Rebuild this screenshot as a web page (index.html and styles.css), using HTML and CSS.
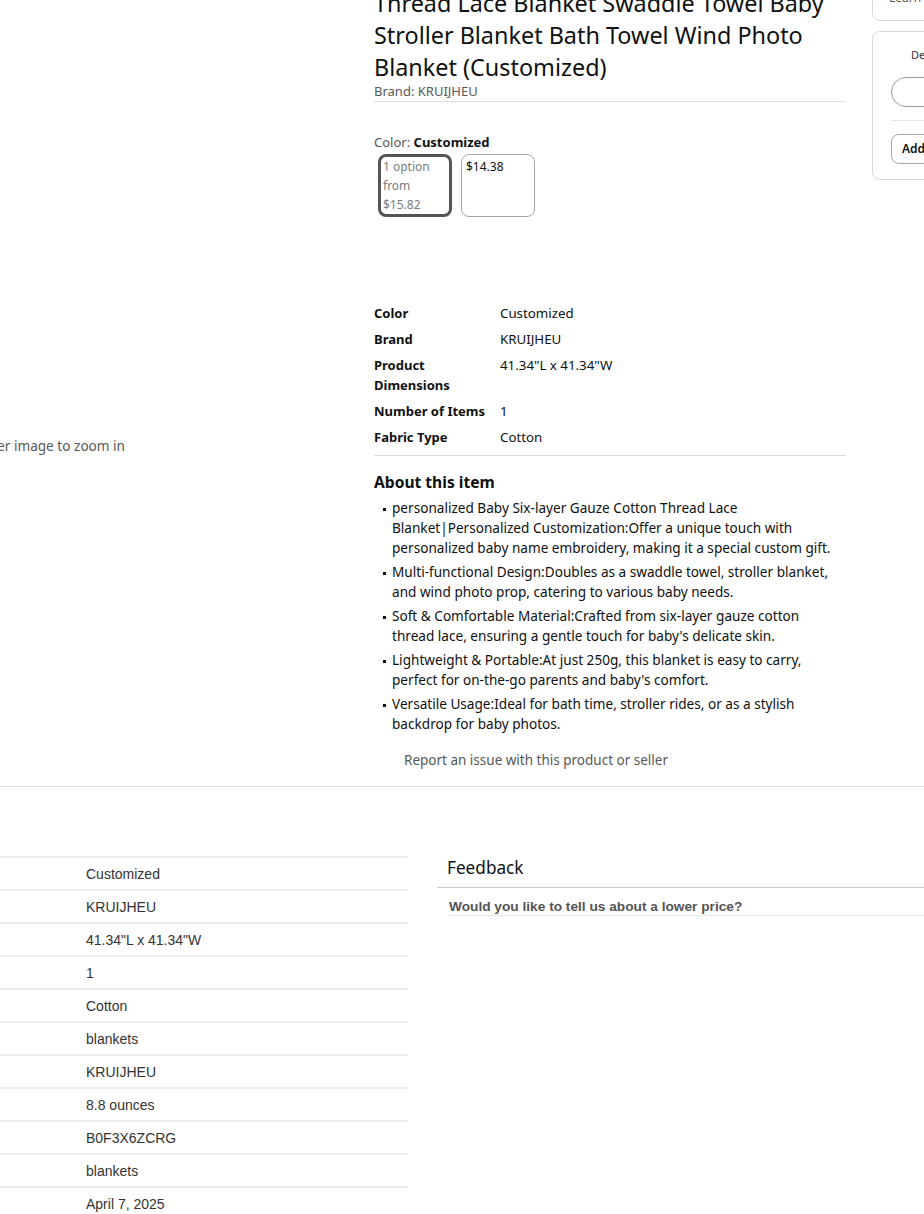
FILE: index.html
```html
<!DOCTYPE html>
<html lang="en">
<head>
<meta charset="utf-8">
<title>Product</title>
<link rel="stylesheet" href="styles.css">
</head>
<body>
<div class="page">
  <div class="top">
    <div class="media">
      <div class="image-slot"></div>
      <p class="zoom-hint">Roll over image to zoom in</p>
    </div>
    <div class="center">
      <h1 class="title">personalized Baby Six-layer Gauze Cotton Thread Lace Blanket Swaddle Towel Baby Stroller Blanket Bath Towel Wind Photo Blanket (Customized)</h1>
      <a class="brand">Brand: KRUIJHEU</a>
      <hr class="rule">
      <div class="variation"><span class="var-label">Color:</span> <b>Customized</b></div>
      <ul class="swatches">
        <li class="swatch selected">1 option<br>from<br>$15.82</li>
        <li class="swatch">$14.38</li>
      </ul>
      <table class="overview">
        <tr><th>Color</th><td>Customized</td></tr>
        <tr><th>Brand</th><td>KRUIJHEU</td></tr>
        <tr><th>Product Dimensions</th><td>41.34"L x 41.34"W</td></tr>
        <tr><th>Number of Items</th><td>1</td></tr>
        <tr><th>Fabric Type</th><td>Cotton</td></tr>
      </table>
      <hr class="rule rule-b">
      <h2 class="about">About this item</h2>
      <ul class="bullets">
        <li>personalized Baby Six-layer Gauze Cotton Thread Lace Blanket|Personalized Customization:Offer a unique touch with personalized baby name embroidery, making it a special custom gift.</li>
        <li>Multi-functional Design:Doubles as a swaddle towel, stroller blanket, and wind photo prop, catering to various baby needs.</li>
        <li>Soft &amp; Comfortable Material:Crafted from six-layer gauze cotton thread lace, ensuring a gentle touch for baby's delicate skin.</li>
        <li>Lightweight &amp; Portable:At just 250g, this blanket is easy to carry, perfect for on-the-go parents and baby's comfort.</li>
        <li>Versatile Usage:Ideal for bath time, stroller rides, or as a stylish backdrop for baby photos.</li>
      </ul>
      <a class="report">Report an issue with this product or seller</a>
    </div>
    <div class="buybox">
      <div class="box box-a"><span class="learn">Learn more</span></div>
      <div class="box box-b">
        <p class="deliver">Deliver to Columbus 43215</p>
        <div class="pill"></div>
        <hr class="box-rule">
        <div class="add">Add to List</div>
      </div>
    </div>
  </div>
  <div class="divider"></div>
  <div class="bottom">
    <div class="specs-col">
      <table class="specs">
        <tr><th>Color</th><td>Customized</td></tr>
        <tr><th>Brand</th><td>KRUIJHEU</td></tr>
        <tr><th>Product Dimensions</th><td>41.34"L x 41.34"W</td></tr>
        <tr><th>Number of Items</th><td>1</td></tr>
        <tr><th>Fabric Type</th><td>Cotton</td></tr>
        <tr><th>Product Type</th><td>blankets</td></tr>
        <tr><th>Manufacturer</th><td>KRUIJHEU</td></tr>
        <tr><th>Item Weight</th><td>8.8 ounces</td></tr>
        <tr><th>ASIN</th><td>B0F3X6ZCRG</td></tr>
        <tr><th>Item Type Name</th><td>blankets</td></tr>
        <tr><th>Date First Available</th><td>April 7, 2025</td></tr>
      </table>
    </div>
    <div class="feedback">
      <h3 class="fb-title">Feedback</h3>
      <p class="fb-link">Would you like to tell us about a lower price?</p>
    </div>
  </div>
</div>
</body>
</html>
```
FILE: styles.css
```css
html, body {
  margin: 0;
  padding: 0;
  background: #fff;
  overflow: hidden;
}
body {
  font-family: "Noto Sans", "Open Sans", sans-serif;
  color: #0f1111;
  font-size: 13px;
}
.page {
  margin-left: -280px;
  margin-top: -45px;
  width: 1500px;
}
.top {
  display: flex;
  align-items: flex-start;
}
.media {
  flex: 0 0 640px;
  margin-right: 14px;
  display: flex;
  flex-direction: column;
  align-items: center;
}
.image-slot {
  height: 482px;
}
.zoom-hint {
  margin: 0;
  font-size: 13.6px;
  line-height: 18px;
  color: #565959;
}
.center {
  flex: 0 0 472px;
  display: flex;
  flex-direction: column;
  align-items: flex-start;
}
.title {
  margin: 0;
  font-size: 23.4px;
  line-height: 32px;
  font-weight: 400;
  color: #0f1111;
}
.brand {
  font-size: 13px;
  line-height: 16px;
  color: #565959;
}
.rule {
  align-self: stretch;
  margin: 2px 0 0;
  border: 0;
  border-top: 1px solid #ddd;
  height: 0;
}
.variation {
  margin-top: 32px;
  font-size: 13px;
  line-height: 16px;
  color: #565959;
}
.variation b {
  color: #0f1111;
  font-weight: 700;
}
.swatches {
  list-style: none;
  margin: 4px 0 0 4px;
  padding: 0;
  display: flex;
  gap: 9px;
}
.swatch {
  box-sizing: border-box;
  width: 74px;
  height: 63px;
  border: 1px solid #a6a6a6;
  border-radius: 8px;
  padding: 2px 4px;
  font-size: 12px;
  line-height: 19px;
  color: #0f1111;
}
.swatch.selected {
  border: 3px solid #555;
  padding: 0 2px;
  color: #7a7e7e;
}
.overview {
  margin-top: 83px;
  border-collapse: collapse;
  font-size: 13.3px;
  line-height: 20px;
}
.overview th {
  width: 126px;
  box-sizing: border-box;
  text-align: left;
  vertical-align: top;
  font-weight: 700;
  font-size: 13px;
  padding: 3px 12px 3px 0;
}
.overview td {
  vertical-align: top;
  padding: 3px 0;
}
.rule-b {
  margin-top: 5px;
}
.about {
  margin: 14px 0 0;
  font-size: 15.6px;
  line-height: 24px;
  font-weight: 700;
}
.bullets {
  list-style: none;
  margin: 4px 0 0;
  padding: 0 6px 0 18px;
}
.bullets li {
  font-size: 13.6px;
  line-height: 20px;
  margin-bottom: 4px;
}
.bullets li::before {
  content: "";
  display: inline-block;
  width: 3px;
  height: 3px;
  background: #0f1111;
  margin-left: -9px;
  margin-right: 6px;
  vertical-align: middle;
}
.report {
  margin: 14px 0 0 30px;
  font-size: 13.5px;
  line-height: 16px;
  color: #565959;
}
.buybox {
  margin-left: 26px;
  flex: 0 0 244px;
  margin-top: -20px;
}
.box {
  border: 1px solid #d5d9d9;
  border-radius: 8px;
  box-sizing: border-box;
}
.box-a {
  height: 86px;
  padding: 52px 16px 0;
}
.learn {
  font-size: 12px;
  color: #565959;
}
.box-b {
  margin-top: 10px;
  height: 149px;
  padding: 16px 18px 0;
}
.deliver {
  margin: 0 0 0 20px;
  font-size: 11px;
  line-height: 14px;
  color: #333;
}
.pill {
  margin-top: 15px;
  height: 30px;
  border: 1px solid #9a9a9a;
  border-radius: 15px;
  box-sizing: border-box;
}
.box-rule {
  border: 0;
  border-top: 1px solid #e3e6e6;
  margin: 13px 0 0;
}
.add {
  margin-top: 13px;
  height: 30px;
  box-sizing: border-box;
  border: 1px solid #a8a8a8;
  border-radius: 8px;
  padding: 0 10px;
  font-size: 12px;
  line-height: 28px;
  font-weight: 600;
}
.divider {
  margin-top: 18px;
  border-top: 1px solid #ddd;
}
.bottom {
  display: flex;
  align-items: flex-start;
  padding-top: 69px;
}
.specs-col {
  flex: 0 0 688px;
}
.specs {
  width: 100%;
  border-collapse: collapse;
  font-family: "Liberation Sans", Arial, sans-serif;
  font-size: 14px;
  line-height: 19px;
  color: #333;
}
.specs tr {
  border-top: 2px solid #eceded;
}
.specs th {
  width: 359px;
  box-sizing: border-box;
  text-align: left;
  font-weight: 400;
  background: #fff;
  padding: 7px 7px 5px;
}
.specs td {
  padding: 7px 7px 5px;
}
.feedback {
  margin-left: 29px;
  flex: 1;
}
.fb-title {
  margin: 0;
  padding: 0 10px 7px;
  font-size: 17.2px;
  line-height: 24px;
  font-weight: 400;
  border-bottom: 1px solid #ccc;
}
.fb-link {
  margin: 11px 0 0 12px;
  font-family: "Liberation Sans", Arial, sans-serif;
  font-size: 13.7px;
  line-height: 16px;
  font-weight: 700;
  color: #555;
  border-bottom: 1px solid #e7e7e7;
}
```
